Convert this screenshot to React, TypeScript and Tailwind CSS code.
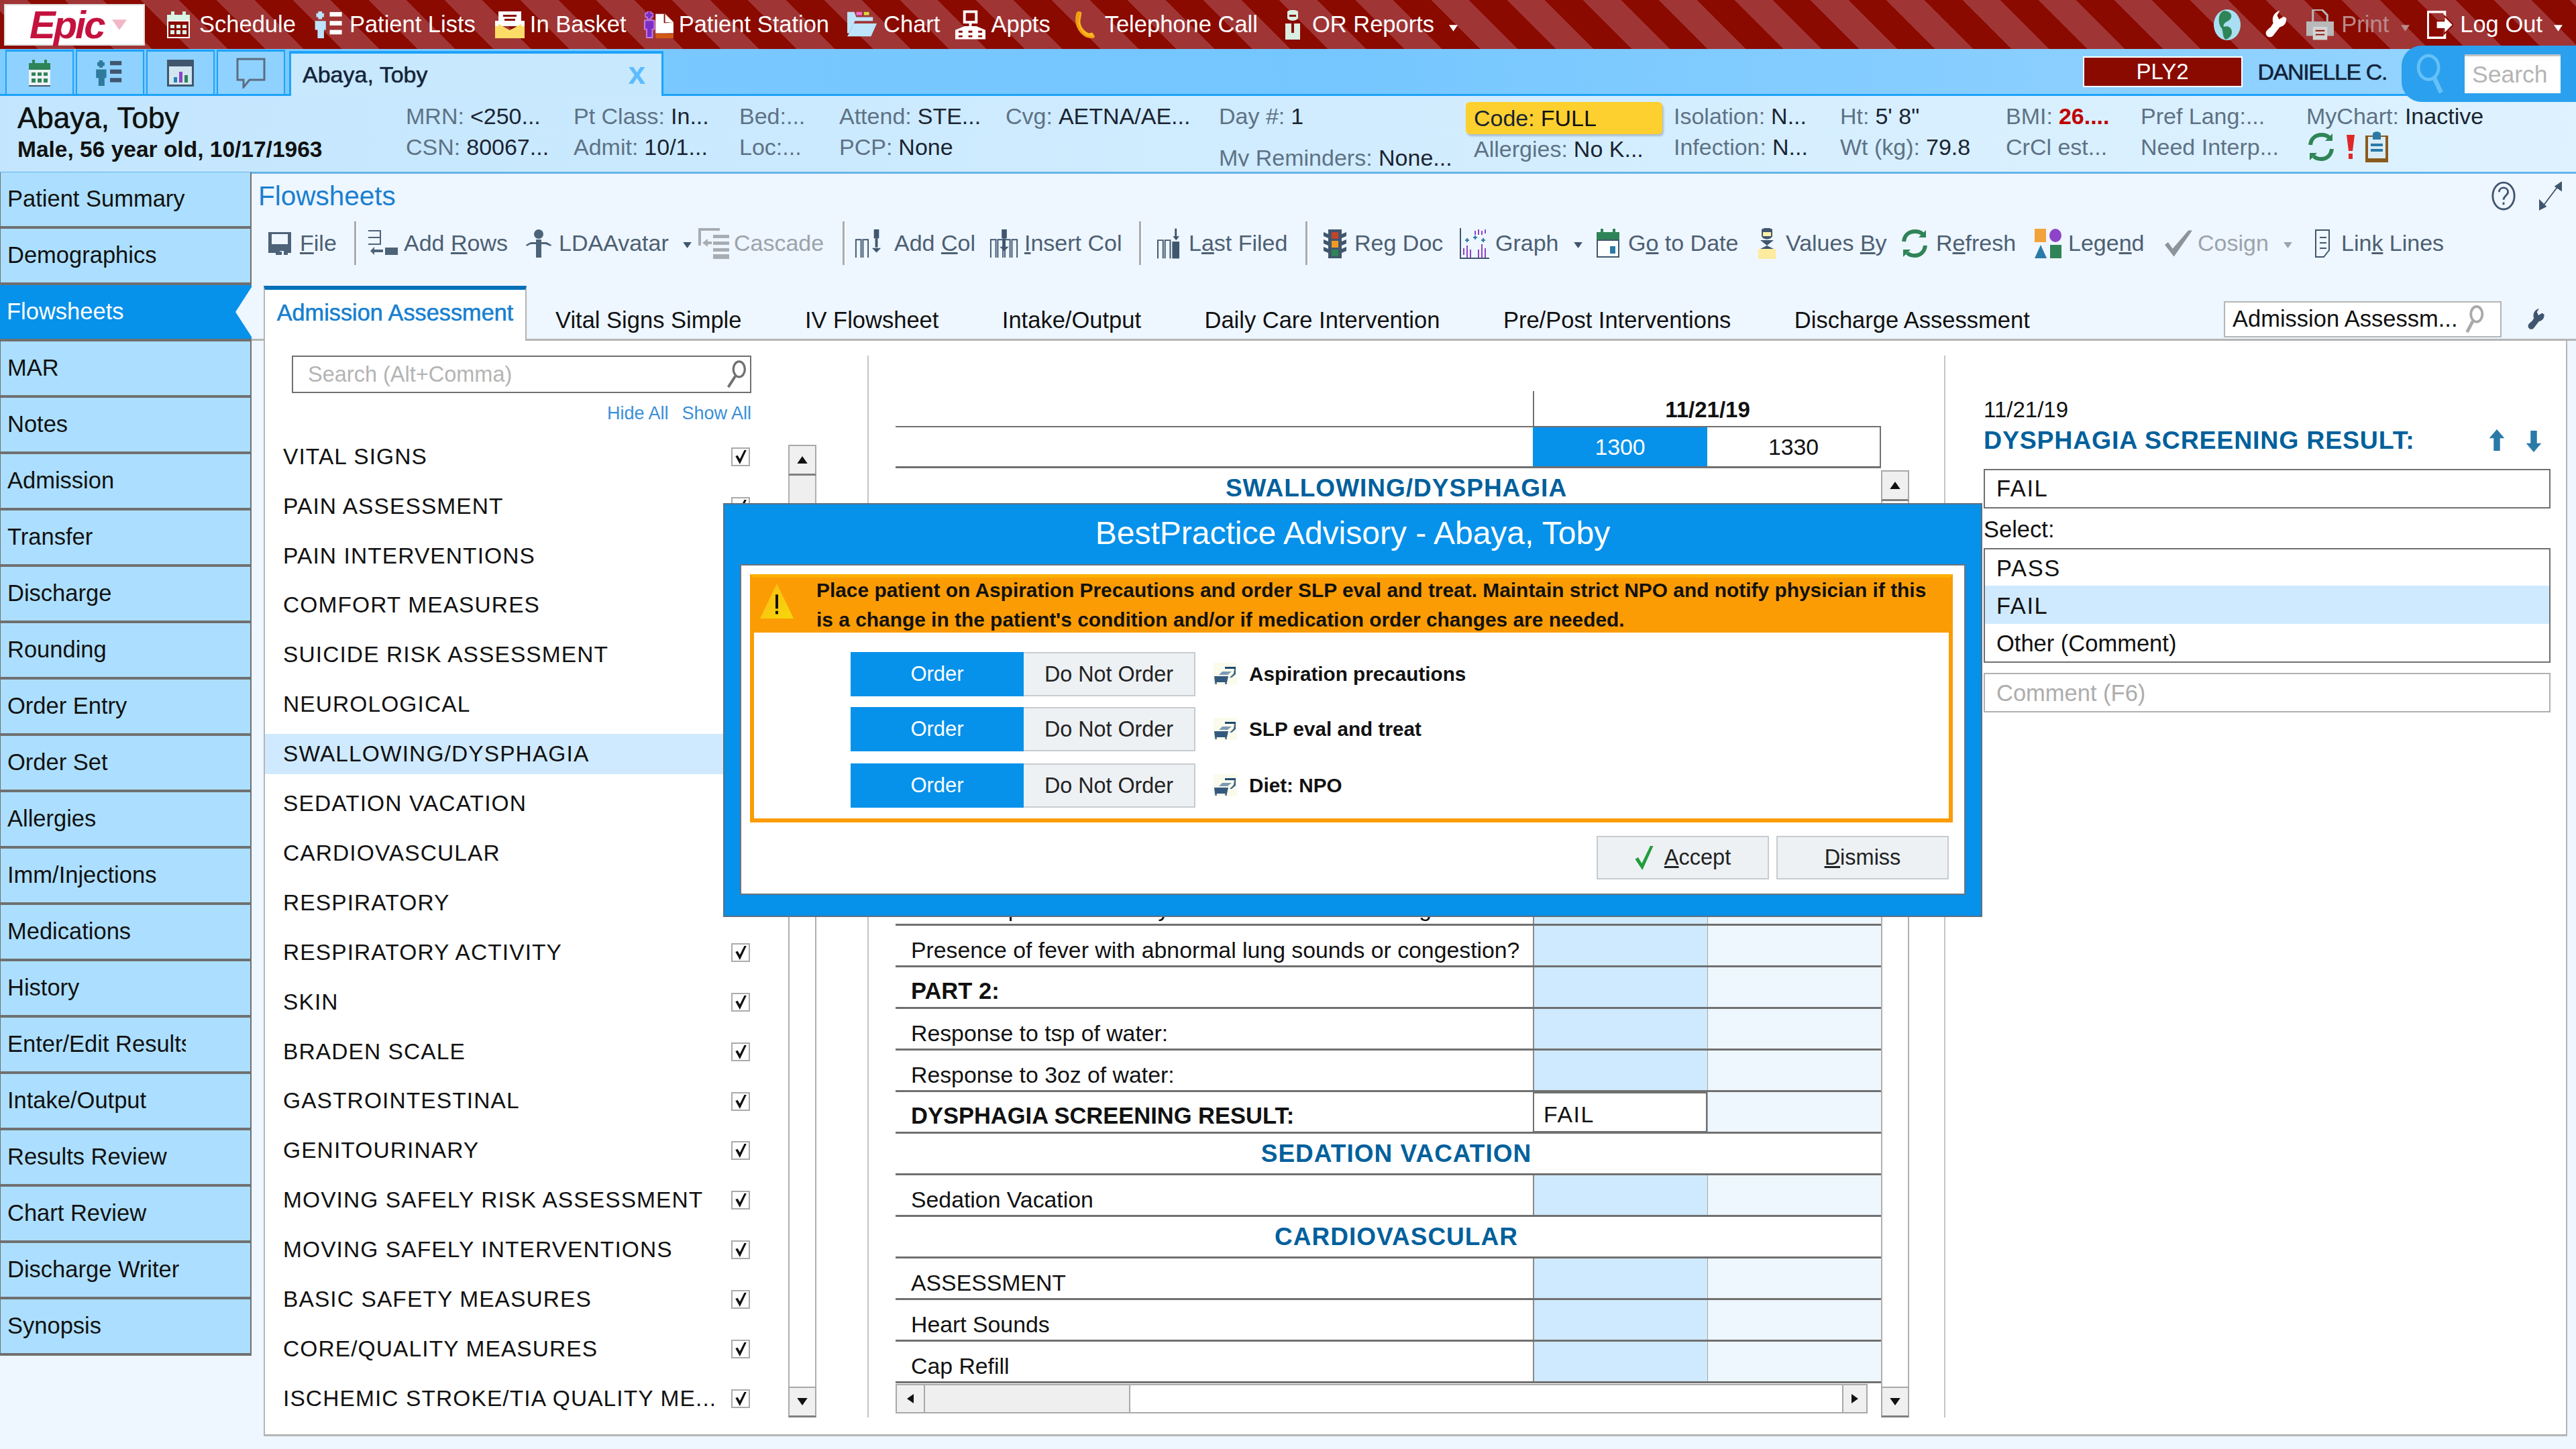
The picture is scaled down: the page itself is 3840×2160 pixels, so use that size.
import type { ReactNode } from "react";

function Cal({ band, body, cell, cls }: { band: string; body: string; cell: string; cls: string }) {
  return (
    <svg viewBox="0 0 34 40" className={cls}>
      <rect x="6" y="0" width="4" height="8" fill={band} />
      <rect x="24" y="0" width="4" height="8" fill={band} />
      <rect x="1" y="5" width="32" height="10" fill={band} />
      <rect x="1" y="15" width="32" height="25" fill={body} />
      <rect x="1" y="38" width="32" height="2" fill="#40566e" />
      {[5, 14, 23].map((x) => (
        <g key={x} fill={cell}>
          <rect x={x} y="19" width="6" height="5" />
          <rect x={x} y="28" width="6" height="6" />
        </g>
      ))}
    </svg>
  );
}

function PersonList({ c, c2, cls }: { c: string; c2: string; cls: string }) {
  return (
    <svg viewBox="0 0 46 42" className={cls}>
      <path d="M5 0h6v3h3v6h-3v3H5V9H2V3h3z" fill={c} />
      <path d="M0 15h17v14h-3v13H4V29H0z" fill={c} />
      <rect x="23" y="1" width="19" height="7" fill={c2} />
      <rect x="23" y="15" width="19" height="7" fill={c2} />
      <rect x="23" y="29" width="19" height="7" fill={c2} />
    </svg>
  );
}

function Wrench({ c, cls }: { c: string; cls: string }) {
  return (
    <svg viewBox="0 0 34 42" className={cls}>
      <path d="M22 0l-4 7 3 6 7-4 4 2c1 7-3 13-10 14L12 38c-4 5-13 2-11-6 1-2 4-5 7-7l4-6C9 10 14 2 22 0z" fill={c} />
    </svg>
  );
}

function Refresh({ cls }: { cls: string }) {
  return (
    <svg viewBox="0 0 42 46" className={cls} fill="none" stroke="#2f8457" strokeWidth="6">
      <path d="M5 20C6 11 12 5 22 5c4 0 8 1 11 4" />
      <path d="M37 26c-1 9-7 15-16 15-4 0-8-1-11-4" />
      <path d="M38 3v11H27z" fill="#2f8457" stroke="none" />
      <path d="M4 43V32h11z" fill="#2f8457" stroke="none" />
    </svg>
  );
}

function Caret({ c, cls }: { c: string; cls: string }) {
  return (
    <svg viewBox="0 0 14 10" className={cls}>
      <path d="M0 0h14L7 10z" fill={c} />
    </svg>
  );
}

// two beds on a pale square, the order type icon in the advisory
function OrderGlyph() {
  return (
    <svg viewBox="0 0 35 33" className="w-[35px] h-[33px] mr-[18px] shrink-0">
      <rect width="35" height="33" fill="#fbfbec" />
      <path d="M17 6h16v3H17z" fill="#1d4a70" />
      <path d="M31 9h2v8l-6 5h-3l6-6z" fill="#3d6488" />
      <path d="M13 13h14l-6 5H8z" fill="#7d9ab5" />
      <path d="M1 20h21l-2 9H2z" fill="#34597e" />
      <path d="M2 29h3v3H2zM17 29h3v3h-3z" fill="#5d7b9c" />
    </svg>
  );
}

function Check() {
  return (
    <span className="w-[28px] h-[28px] bg-white border-2 border-[#ababab] flex items-center justify-center shrink-0">
      <svg viewBox="0 0 20 20" className="w-[22px] h-[24px]">
        <path d="M3 9l3-1 3 5 6-12h3L9 20z" fill="#111" />
      </svg>
    </span>
  );
}

function ScrollBtn({ down }: { down?: boolean }) {
  return (
    <div className="w-full h-[46px] bg-[#f0f0f0] border-2 border-[#a9a9a9] border-b-[3px] border-b-[#7f7f7f] flex items-center justify-center shrink-0">
      <svg viewBox="0 0 14 10" className="w-[16px] h-[11px]">
        <path d={down ? "M0 0h14L7 10z" : "M0 10h14L7 0z"} fill="#111" />
      </svg>
    </div>
  );
}

function TopItem({ icon, label, cls }: { icon: ReactNode; label: string; cls: string }) {
  return (
    <div className={"flex items-center shrink-0 " + cls}>
      {icon}
      <span>{label}</span>
    </div>
  );
}

function TopBar() {
  return (
    <div className="h-[73px] shrink-0 flex items-center text-white text-[34.5px] bg-[repeating-linear-gradient(45deg,#8a0a00_0px,#8a0a00_40px,#a03535_40px,#a03535_80px)]">
      <div className="ml-[6px] w-[210px] h-[62px] bg-white border-2 border-[#ddd] flex items-center shrink-0">
        <span className="ml-[36px] text-[58px] leading-none font-bold italic tracking-[-3px] text-[#c4123f]">Epic</span>
        <Caret c="#f2b6c6" cls="w-[22px] h-[18px] ml-[12px]" />
      </div>
      <TopItem
        cls="ml-[33px]"
        label="Schedule"
        icon={
          <svg viewBox="0 0 34 40" className="w-[34px] h-[40px] mr-[14px]">
            <path d="M6 0h5v6H6zM23 0h5v6h-5z" fill="#d8f5e6" />
            <path d="M0 5h34v10H0z" fill="#d8f5e6" />
            <path d="M1 14h32v25H1z" fill="#8a0a00" stroke="#fff" strokeWidth="2" />
            {[5, 14, 23].map((x) => (
              <g key={x} fill="#d8f5e6">
                <rect x={x} y="20" width="6" height="5" />
                <rect x={x} y="28" width="6" height="6" />
              </g>
            ))}
          </svg>
        }
      />
      <TopItem cls="ml-[28px]" label="Patient Lists" icon={<PersonList c="#bde4fb" c2="#fff" cls="w-[45px] h-[40px] mr-[7px]" />} />
      <TopItem
        cls="ml-[29px]"
        label="In Basket"
        icon={
          <svg viewBox="0 0 44 40" className="w-[44px] h-[40px] mr-[8px]">
            <path d="M5 0h34v22H5z" fill="#fff" />
            <path d="M12 5h20v3H12zM14 11h16v3H14z" fill="#8a0a00" />
            <path d="M0 16l22 12 22-12v24H0z" fill="#fcdc66" />
            <path d="M0 14h5v8H0zM39 14h5v8h-5z" fill="#fff" />
          </svg>
        }
      />
      <TopItem
        cls="ml-[26px]"
        label="Patient Station"
        icon={
          <svg viewBox="0 0 46 42" className="w-[44px] h-[40px] mr-[8px]">
            <path d="M5 0h6v3h3v6h-3v3H5V9H2V3h3z" fill="#7a2fc0" stroke="#c77cf0" strokeWidth="1.5" />
            <path d="M1 14h15v14h-3v13H4V28H1z" fill="#7a2fc0" stroke="#c77cf0" strokeWidth="2" />
            <path d="M18 4h16l12 13v17H18z" fill="#fff" />
            <path d="M31 4h3l12 13h-3l-7 1h-5z" fill="#8a0a00" />
            <path d="M33 4l13 13H33z" fill="#fff" />
            <path d="M18 35h28v7H18z" fill="#d25a12" />
          </svg>
        }
      />
      <TopItem
        cls="ml-[27px]"
        label="Chart"
        icon={
          <svg viewBox="0 0 46 40" className="w-[44px] h-[40px] mr-[10px]">
            <path d="M0 0h11l3 8h26v6H12L3 33H0z" fill="#bde4fb" />
            <rect x="14" y="0" width="9" height="5" fill="#f26bd4" />
            <rect x="26" y="0" width="8" height="5" fill="#d6dc3a" />
            <path d="M10 18h36l-9 20H0l2-3z" fill="#bde4fb" />
          </svg>
        }
      />
      <TopItem
        cls="ml-[23px]"
        label="Appts"
        icon={
          <svg viewBox="0 0 46 44" className="w-[45px] h-[44px] mr-[8px]">
            <path d="M12 0h22v20H12z" fill="#fff" />
            <path d="M16 4h14v12H16z" fill="#8a0a00" />
            <path d="M21 20h4v4h-4z" fill="#fff" />
            <path d="M0 30l14-6h18l14 6v14H0z" fill="#fff" />
            <path d="M5 31h6v3H5zM20 31h6v3h-6zM35 31h6v3h-6zM5 38h6v3H5zM20 38h6v3h-6zM35 38h6v3h-6z" fill="#8a0a00" />
          </svg>
        }
      />
      <TopItem
        cls="ml-[35px]"
        label="Telephone Call"
        icon={
          <svg viewBox="0 0 32 42" className="w-[32px] h-[40px] mr-[14px]">
            <path d="M6 0c3 0 5 1 5 3L9 15c0 9 6 16 13 19l6-1 4 7c-4 2-9 2-13 0C7 35 1 22 2 10 2 6 3 1 6 0z" fill="#fbb81c" />
            <path d="M6 0c2 0 3 1 3 3L6 18c1 6 6 16 14 20l11 1-1 3c-8 0-13-1-18-6C4 29 0 18 2 8 2 4 3 1 6 0z" fill="#f39c12" />
          </svg>
        }
      />
      <TopItem
        cls="ml-[39px]"
        label="OR Reports"
        icon={
          <svg viewBox="0 0 26 44" className="w-[26px] h-[44px] mr-[16px]">
            <path d="M5 2c4-3 12-3 16 0v10c-2 5-14 5-16 0z" fill="#d8efe2" />
            <path d="M8 7h10v3H8z" fill="#8a0a00" />
            <path d="M2 20h22v24H2z" fill="#d8efe2" />
            <path d="M11 20h4v14h-4z" fill="#8a0a00" />
          </svg>
        }
      />
      <Caret c="#fff" cls="w-[13px] h-[10px] ml-[22px] mt-[10px]" />
      <div className="ml-auto flex items-center">
        <svg viewBox="0 0 40 46" className="w-[40px] h-[46px]">
          <ellipse cx="20" cy="23" rx="20" ry="23" fill="#a9dff2" />
          <path d="M15 2c8 0 14 5 10 12-2 4-12 5-10 12 5-2 12 0 12 8 0 5-4 9-9 11-6-3-3-13-7-18C7 22 5 6 15 2z" fill="#2f8457" />
        </svg>
        <Wrench c="#fff" cls="w-[33px] h-[41px] ml-[37px]" />
        <TopItem
          cls="ml-[28px] text-[#ba8b8b]"
          label="Print"
          icon={
            <svg viewBox="0 0 42 46" className="w-[41px] h-[46px] mr-[11px]">
              <path d="M10 0h14l8 8v12H10z" fill="none" stroke="#b9b9b9" strokeWidth="3" />
              <path d="M0 18h42v22H0z" fill="#b9b9b9" />
              <path d="M10 26h22v20H10z" fill="#d4d4d4" />
              <path d="M14 31h14v2H14zM14 37h14v2H14z" fill="#8a0a00" />
            </svg>
          }
        />
        <Caret c="#ba8b8b" cls="w-[13px] h-[10px] ml-[18px] mt-[10px]" />
        <TopItem
          cls="ml-[26px]"
          label="Log Out"
          icon={
            <svg viewBox="0 0 40 42" className="w-[39px] h-[42px] mr-[10px]">
              <path d="M1 1h26v40H1z" fill="none" stroke="#fff" strokeWidth="4" />
              <path d="M14 15h12V7l14 14-14 14v-8H14z" fill="#fff" stroke="#8a0a00" strokeWidth="2" />
            </svg>
          }
        />
        <Caret c="#fff" cls="w-[13px] h-[10px] ml-[17px] mr-[20px] mt-[10px]" />
      </div>
    </div>
  );
}

function SmallTab({ children }: { children: ReactNode }) {
  return (
    <div className="w-[102px] h-[66px] mr-[3px] bg-[#8fd2ff] border-2 border-b-0 border-t-[3px] border-[#1ea3fb] flex items-center justify-center shrink-0">
      {children}
    </div>
  );
}

function TabBar() {
  return (
    <div className="h-[70px] shrink-0 flex items-end pl-[8px] border-b-[3px] border-[#1ea3fb] bg-gradient-to-r from-[#7ecbff] via-[#74c6ff] to-[#97d5ff]">
      <SmallTab>
        <Cal band="#2f8457" body="#eef2f4" cell="#2f8457" cls="w-[34px] h-[40px]" />
      </SmallTab>
      <SmallTab>
        <PersonList c="#2f7a9c" c2="#40566e" cls="w-[42px] h-[38px]" />
      </SmallTab>
      <SmallTab>
        <svg viewBox="0 0 40 40" className="w-[40px] h-[40px]">
          <path d="M0 0h40v40H0z" fill="#40566e" />
          <path d="M3 10h34v27H3z" fill="#d2e6f0" />
          <path d="M10 26h5v8h-5z" fill="#2a80b0" />
          <path d="M18 18h5v16h-5z" fill="#8e44c8" />
          <path d="M26 23h5v11h-5z" fill="#2f8457" />
        </svg>
      </SmallTab>
      <SmallTab>
        <svg viewBox="0 0 44 46" className="w-[44px] h-[46px]" fill="none" stroke="#5c6d80" strokeWidth="3">
          <path d="M2 2h40v31H20l-9 11v-11H2z" />
        </svg>
      </SmallTab>
      <div className="w-[558px] h-[67px] -mb-[3px] ml-[3px] bg-[#c8e8fe] border-x-[3px] border-t-[4px] border-[#1ea3fb] border-b-0 flex items-center pl-[17px] shrink-0">
        <span className="text-[34px] text-[#16243a] [text-shadow:0_0_1px_#16243a]">Abaya, Toby</span>
        <span className="ml-auto mr-[24px] text-[#5bbcff] text-[46px] font-bold leading-none -mt-[6px]">x</span>
      </div>
      <div className="ml-auto self-center flex items-center mr-[282px] mt-[1px]">
        <div className="w-[238px] h-[46px] bg-[#8a0a00] border-2 border-white text-white text-[33px] flex items-center justify-center">
          PLY2
        </div>
        <span className="ml-[23px] text-[34px] tracking-[-1.4px] text-[#14223a] [text-shadow:0_0_1px_#14223a]">DANIELLE C.</span>
      </div>
    </div>
  );
}

function Field({ label, value, cls }: { label: string; value?: string; cls?: string }) {
  return (
    <div className={"h-[46px] flex items-center whitespace-nowrap " + (cls ?? "")}>
      <span>{label}</span>
      {value ? <span className="text-[#1a2432] ml-[9px]">{value}</span> : null}
    </div>
  );
}

function PatientHeader() {
  return (
    <div className="h-[116px] shrink-0 flex border-b-[3px] border-[#64b5ea] bg-gradient-to-r from-[#c3e6fe] to-[#def2ff] text-[34px] text-[#5e7285]">
      <div className="w-[605px] pl-[26px] pt-[5px] shrink-0 text-[#111]">
        <div className="text-[44px] leading-[56px] [text-shadow:0_0_1px_#111]">Abaya, Toby</div>
        <div className="text-[33.5px] leading-[38px] font-bold">Male, 56 year old, 10/17/1963</div>
      </div>
      <div className="w-[250px] pt-[7px] shrink-0">
        <Field label="MRN:" value="<250..." />
        <Field label="CSN:" value="80067..." />
      </div>
      <div className="w-[247px] pt-[7px] shrink-0">
        <Field label="Pt Class:" value="In..." />
        <Field label="Admit:" value="10/1..." />
      </div>
      <div className="w-[149px] pt-[7px] shrink-0">
        <Field label="Bed:..." />
        <Field label="Loc:..." />
      </div>
      <div className="w-[248px] pt-[7px] shrink-0">
        <Field label="Attend:" value="STE..." />
        <Field label="PCP:" value="None" />
      </div>
      <div className="w-[318px] pt-[7px] shrink-0">
        <Field label="Cvg:" value="AETNA/AE..." />
      </div>
      <div className="w-[368px] pt-[7px] shrink-0">
        <Field label="Day #:" value="1" />
        <div className="h-[26px] mt-[26px] leading-[26px] overflow-hidden whitespace-nowrap">
          My Reminders: <span className="text-[#1a2432]">None...</span>
        </div>
      </div>
      <div className="w-[310px] pt-[9px] shrink-0">
        <div className="w-[293px] h-[48px] bg-[#fdd02f] rounded-[6px] shadow-[2px_3px_3px_rgba(0,0,0,0.2)] flex items-center pl-[12px] text-[#1a2432]">
          Code:<span className="ml-[9px] text-[#111]">FULL</span>
        </div>
        <div className="pl-[12px] -mt-[1px]">
          <Field label="Allergies:" value="No K..." />
        </div>
      </div>
      <div className="w-[248px] pt-[7px] shrink-0">
        <Field label="Isolation:" value="N..." />
        <Field label="Infection:" value="N..." />
      </div>
      <div className="w-[247px] pt-[7px] shrink-0">
        <Field label="Ht:" value={"5' 8\""} />
        <Field label="Wt (kg):" value="79.8" />
      </div>
      <div className="w-[201px] pt-[7px] shrink-0">
        <div className="h-[46px] flex items-center whitespace-nowrap">
          BMI:<span className="ml-[9px] text-[#c00000] font-bold">26....</span>
        </div>
        <Field label="CrCl est..." />
      </div>
      <div className="w-[247px] pt-[7px] shrink-0">
        <Field label="Pref Lang:..." />
        <Field label="Need Interp..." />
      </div>
      <div className="pt-[7px] flex-1">
        <Field label="MyChart:" value="Inactive" />
        <div className="flex items-center h-[46px]">
          <Refresh cls="w-[44px] h-[46px]" />
          <svg viewBox="0 0 12 36" className="w-[12px] h-[36px] ml-[16px]">
            <path d="M0 0h12l-3 24H3z" fill="#e02727" />
            <rect x="3" y="28" width="6" height="8" fill="#e02727" />
          </svg>
          <svg viewBox="0 0 34 46" className="w-[34px] h-[46px] ml-[16px]">
            <path d="M0 6h34v40H0z" fill="#8a5a1e" />
            <path d="M4 8h26v32H4z" fill="#d9ecf7" />
            <path d="M11 4c0-5 12-5 12 0v8H11z" fill="#2a7aa8" />
            <path d="M8 18h18v4H8zM8 26h18v4H8z" fill="#2a7aa8" />
          </svg>
        </div>
      </div>
    </div>
  );
}

const sideItems = [
  "Patient Summary",
  "Demographics",
  "Flowsheets",
  "MAR",
  "Notes",
  "Admission",
  "Transfer",
  "Discharge",
  "Rounding",
  "Order Entry",
  "Order Set",
  "Allergies",
  "Imm/Injections",
  "Medications",
  "History",
  "Enter/Edit Results",
  "Intake/Output",
  "Results Review",
  "Chart Review",
  "Discharge Writer",
  "Synopsis",
];

function Sidebar() {
  return (
    <div className="w-[375px] shrink-0 flex flex-col -mt-[2px]">
      {sideItems.map((s) =>
        s === "Flowsheets" ? (
          <div key={s} className="relative h-[84px] pl-[10px] flex items-center text-white bg-[#0691ea] border-b-[4px] border-[#707070] text-[34.5px]">
            {s}
            <svg viewBox="0 0 24 80" preserveAspectRatio="none" className="absolute right-0 top-[3px] w-[24px] h-[74px]">
              <path d="M24 0L0 40l24 40z" fill="#eef6ff" />
            </svg>
          </div>
        ) : (
          <div key={s} className="h-[84px] pl-[10px] flex items-center bg-[#acdfff] border-b-[4px] border-r-2 border-l border-[#707070] text-[34.5px] text-[#111]">
            <span className={s === "Enter/Edit Results" ? "w-[266px] overflow-hidden whitespace-nowrap" : "whitespace-nowrap"}>{s}</span>
          </div>
        ),
      )}
    </div>
  );
}

function Tool({
  w,
  iconW,
  icon,
  children,
  caret,
  muted,
}: {
  w: string;
  iconW: string;
  icon: ReactNode;
  children: ReactNode;
  caret?: string;
  muted?: boolean;
}) {
  return (
    <div className={"flex items-center shrink-0 whitespace-nowrap " + w + (muted ? " text-[#9ca3ab]" : "")}>
      <div className={"shrink-0 flex items-center " + iconW}>{icon}</div>
      <span>{children}</span>
      {caret ? <Caret c={muted ? "#9ca3ab" : "#40566e"} cls={"w-[13px] h-[9px] mt-[6px] " + caret} /> : null}
    </div>
  );
}

function Sep() {
  return <div className="w-[5px] h-[65px] bg-[#a9acaf] border-r-2 border-white shrink-0 -ml-[1px] -mr-[2px]" />;
}

function ColIcon({ flip }: { flip?: boolean }) {
  return (
    <svg viewBox="0 0 46 44" className="w-[44px] h-[44px]" fill="none">
      <path d="M2 44V16h8v28M13 44V16h8v28" stroke="#40566e" strokeWidth="2" />
      {flip ? <path d="M24 44V16h8v28M35 44V16h8v28" stroke="#40566e" strokeWidth="2" /> : null}
      <rect x={flip ? 19 : 30} y="0" width="8" height="14" fill="#40566e" />
      <path d={flip ? "M23 34l-7-7h14z" : "M34 36l-7-7h14z"} fill="#40566e" />
      <rect x={flip ? 21 : 32} y="14" width="4" height="14" fill="#40566e" />
    </svg>
  );
}

function Toolbar() {
  return (
    <div className="h-[65px] mt-[5px] ml-[25px] flex items-center text-[34px] text-[#4c6073] shrink-0">
      <Tool
        w="w-[129px]"
        iconW="w-[47px]"
        icon={
          <svg viewBox="0 0 34 34" className="w-[34px] h-[34px]">
            <path d="M0 0h34v31h-5v3h-6v-6h-6v6h-6v-3H6v3H6v-3H0z" fill="#4d6378" />
            <rect x="5" y="3" width="24" height="15" fill="#eef6ff" />
            <rect x="14" y="29" width="6" height="5" fill="#4d6378" />
          </svg>
        }
      >
        <span className="underline">F</span>ile
      </Tool>
      <Sep />
      <div className="w-[18px] shrink-0" />
      <Tool
        w="w-[235px]"
        iconW="w-[53px]"
        icon={
          <svg viewBox="0 0 44 40" className="w-[44px] h-[40px]">
            <path d="M0 0h19v2H0zM0 10h19v2H0zM0 20h19v2H0zM17 0h2v22h-2z" fill="#4d6378" />
            <path d="M3 31l6-6v4h13v4H9v4z" fill="#4d6378" />
            <rect x="25" y="26" width="19" height="11" fill="#4d6378" />
          </svg>
        }
      >
        Add <span className="underline">R</span>ows
      </Tool>
      <Tool
        w="w-[257px]"
        iconW="w-[49px]"
        caret="ml-[21px]"
        icon={
          <svg viewBox="0 0 38 42" className="w-[38px] h-[42px]">
            <circle cx="19" cy="7" r="7" fill="#4d6378" />
            <path d="M15 15h8v4h8l7 4-1 2-8-3h-6v20h-8V22H7l-6 3-1-2 7-4h8z" fill="#4d6378" />
          </svg>
        }
      >
        LDAAvatar
      </Tool>
      <Tool
        w="w-[216px]"
        iconW="w-[53px]"
        muted
        icon={
          <svg viewBox="0 0 46 46" className="w-[46px] h-[46px]" fill="#a7adb3">
            <path d="M0 0h32v4H4v22H0z" />
            <path d="M22 10h24v5H22zM22 20h24v5H22zM22 30h24v5H22zM22 39h24v7H22z" />
            <path d="M6 22l8-6v4h6v4h-6v4z" />
          </svg>
        }
      >
        Cascade
      </Tool>
      <Sep />
      <div className="w-[15px] shrink-0" />
      <Tool w="w-[201px]" iconW="w-[59px]" icon={<ColIcon />}>
        Add <span className="underline">C</span>ol
      </Tool>
      <Tool w="w-[224px]" iconW="w-[52px]" icon={<ColIcon flip />}>
        <span className="underline">I</span>nsert Col
      </Tool>
      <Sep />
      <div className="w-[24px] shrink-0" />
      <Tool
        w="w-[222px]"
        iconW="w-[47px]"
        icon={
          <svg viewBox="0 0 36 46" className="w-[35px] h-[46px]">
            <path d="M1 46V18h8v28M12 46V18h8v28" fill="none" stroke="#40566e" strokeWidth="2" />
            <rect x="23" y="20" width="11" height="26" fill="#40566e" />
            <path d="M27 0h3v12h4l-5 6-5-6h3z" fill="#40566e" />
          </svg>
        }
      >
        L<span className="underline">a</span>st Filed
      </Tool>
      <Sep />
      <div className="w-[24px] shrink-0" />
      <Tool
        w="w-[203px]"
        iconW="w-[46px]"
        icon={
          <svg viewBox="0 0 34 46" className="w-[34px] h-[46px]">
            <path d="M0 6l7 3V2h20v7l7-3v6l-7 3v5l7-3v6l-7 3v5l7-3v6l-7 3v8H7v-8l-7-3v-6l7 3v-5l-7-3v-6l7 3v-5l-7-3z" fill="#40566e" />
            <rect x="12" y="6" width="10" height="10" fill="#c2442a" />
            <rect x="12" y="19" width="10" height="10" fill="#f19a22" />
            <rect x="12" y="32" width="10" height="10" fill="#2f8457" />
          </svg>
        }
      >
        Re<span className="underline">g</span> Doc
      </Tool>
      <Tool
        w="w-[204px]"
        iconW="w-[53px]"
        caret="ml-[22px]"
        icon={
          <svg viewBox="0 0 44 46" className="w-[44px] h-[46px]">
            <path d="M0 0h2v44h42v2H0z" fill="#40566e" />
            <path d="M6 40V30M11 44V26M16 44V32M28 44V32M33 44V24M38 44V30M23 4V10M28 2V10M33 4V10M38 2V8" stroke="#8e44c8" strokeWidth="2" />
            <path d="M8 18h6M11 15v6M20 14h6M23 11v6M32 18h6M35 15v6" stroke="#2a7aa8" strokeWidth="2" />
          </svg>
        }
      >
        Graph
      </Tool>
      <Tool
        w="w-[241px]"
        iconW="w-[47px]"
        icon={
          <svg viewBox="0 0 34 44" className="w-[34px] h-[44px]">
            <path d="M6 0h4v6H6zM24 0h4v6h-4z" fill="#2f8457" />
            <path d="M0 5h34v12H0z" fill="#2f8457" />
            <path d="M1 17h32v25H1z" fill="#fff" stroke="#40566e" strokeWidth="2" />
            <path d="M20 26h8v11h-8z" fill="#2a7aa8" />
          </svg>
        }
      >
        G<span className="underline">o</span> to Date
      </Tool>
      <Tool
        w="w-[212px]"
        iconW="w-[41px]"
        icon={
          <svg viewBox="0 0 26 46" className="w-[26px] h-[46px]">
            <path d="M5 2c4-3 12-3 16 0v10c-2 6-14 6-16 0z" fill="#40566e" />
            <path d="M7 6h12v6H7z" fill="#fdf1a8" />
            <path d="M3 18h20l-10 8z" fill="#40566e" />
            <path d="M13 26l10 5H3z" fill="#40566e" />
            <path d="M0 31h26v15H0z" fill="#fdeb9e" />
          </svg>
        }
      >
        Values <span className="underline">B</span>y
      </Tool>
      <Tool w="w-[200px]" iconW="w-[53px]" icon={<Refresh cls="w-[42px] h-[46px]" />}>
        R<span className="underline">e</span>fresh
      </Tool>
      <Tool
        w="w-[194px]"
        iconW="w-[50px]"
        icon={
          <svg viewBox="0 0 40 44" className="w-[40px] h-[44px]">
            <rect x="0" y="0" width="17" height="20" fill="#f3a33c" />
            <ellipse cx="31" cy="10" rx="9" ry="10" fill="#8e44c8" />
            <path d="M9 24l9 20H0z" fill="#2a7aa8" />
            <rect x="23" y="24" width="17" height="20" fill="#2f8457" />
          </svg>
        }
      >
        Lege<span className="underline">n</span>d
      </Tool>
      <Tool
        w="w-[223px]"
        iconW="w-[49px]"
        muted
        caret="ml-[22px]"
        icon={
          <svg viewBox="0 0 42 40" className="w-[41px] h-[40px]">
            <path d="M0 22l5-4 7 10L36 0h6L14 40z" fill="#8d949a" />
          </svg>
        }
      >
        Cosign
      </Tool>
      <Tool
        w="w-[230px]"
        iconW="w-[40px]"
        icon={
          <svg viewBox="0 0 26 46" className="w-[26px] h-[46px]" fill="none" stroke="#40566e" strokeWidth="2">
            <path d="M6 3h16v30l-8 10H2V3z" />
            <path d="M2 3h12M8 14h10M8 22h10M8 30h10" />
          </svg>
        }
      >
        Lin<span className="underline">k</span> Lines
      </Tool>
    </div>
  );
}

function Tabs() {
  return (
    <div className="h-[82px] mt-[31px] flex items-end shrink-0 border-b-[3px] border-[#b5b5b5] text-[34.5px] text-[#111]">
      <div className="w-[392px] ml-[18px] h-[82px] -mb-[3px] bg-white border-t-[6px] border-[#0070b8] border-x-2 border-x-[#b5b5b5] flex items-start justify-center shrink-0 pt-[9px]">
        <span className="text-[#1a7fd0] text-[34.3px] [text-shadow:0_0_1px_#1a7fd0] whitespace-nowrap">Admission Assessment</span>
      </div>
      <div className="flex h-full items-center gap-[94.5px] ml-[43px] pt-[24px] whitespace-nowrap">
        <span>Vital Signs Simple</span>
        <span>IV Flowsheet</span>
        <span>Intake/Output</span>
        <span>Daily Care Intervention</span>
        <span>Pre/Post Interventions</span>
        <span>Discharge Assessment</span>
      </div>
      <div className="ml-auto flex items-center h-full pt-[21px] mr-[45px]">
        <div className="w-[414px] h-[54px] bg-white border-2 border-[#b5b5b5] flex items-center pl-[11px] whitespace-nowrap">
          <span>Admission Assessm...</span>
          <svg viewBox="0 0 30 44" className="w-[32px] h-[42px] ml-[8px]" fill="none" stroke="#a9a9a9" strokeWidth="4">
            <ellipse cx="19" cy="14" rx="9" ry="12" />
            <path d="M13 25L4 42" strokeWidth="5" />
          </svg>
        </div>
        <Wrench c="#40566e" cls="w-[28px] h-[32px] ml-[38px]" />
      </div>
    </div>
  );
}

const groups: [string, boolean][] = [
  "VITAL SIGNS",
  "PAIN ASSESSMENT",
  "PAIN INTERVENTIONS",
  "COMFORT MEASURES",
  "SUICIDE RISK ASSESSMENT",
  "NEUROLOGICAL",
  "SWALLOWING/DYSPHAGIA",
  "SEDATION VACATION",
  "CARDIOVASCULAR",
  "RESPIRATORY",
  "RESPIRATORY ACTIVITY",
  "SKIN",
  "BRADEN SCALE",
  "GASTROINTESTINAL",
  "GENITOURINARY",
  "MOVING SAFELY RISK ASSESSMENT",
  "MOVING SAFELY INTERVENTIONS",
  "BASIC SAFETY MEASURES",
  "CORE/QUALITY MEASURES",
  "ISCHEMIC STROKE/TIA QUALITY ME...",
].map((g) => [g, g === "SWALLOWING/DYSPHAGIA"]);

function GroupList() {
  return (
    <div className="w-[898px] shrink-0 flex flex-col">
      <div className="ml-[40px] w-[685px] h-[56px] shrink-0 border-2 border-[#707070] flex items-center pl-[22px] text-[32.5px] text-[#b4b4b4]">
        Search (Alt+Comma)
        <svg viewBox="0 0 30 44" className="w-[36px] h-[42px] ml-auto mr-[3px]" fill="none" stroke="#707070" strokeWidth="3.5">
          <ellipse cx="20" cy="14" rx="9" ry="12" />
          <path d="M14 25L3 42" strokeWidth="4" />
        </svg>
      </div>
      <div className="ml-[40px] w-[685px] h-[58px] shrink-0 flex items-center justify-end gap-[20px] text-[27px] text-[#3a8fd8] pt-[2px]">
        <span>Hide All</span>
        <span>Show All</span>
      </div>
      <div className="flex flex-1 min-h-0">
        <div className="w-[780px] shrink-0 text-[33.5px] tracking-[1.1px] text-[#111]">
          {groups.map(([g, sel]) => (
            <div key={g} className="h-[73.9px] flex items-center">
              <div className={"w-full h-[60px] flex items-center pl-[27px] " + (sel ? "bg-[#cfeaff]" : "")}>
                <span className="whitespace-nowrap">{g}</span>
                {sel ? null : <span className="ml-auto mr-[57px]"><Check /></span>}
              </div>
            </div>
          ))}
        </div>
        <div className="w-[42px] shrink-0 mt-[19px] flex flex-col justify-between border-x-2 border-[#b0b0b0]">
          <div className="-mx-[2px]">
            <ScrollBtn />
            <div className="h-[200px] bg-[#efefef] border-x-2 border-b-2 border-[#b0b0b0]" />
          </div>
          <div className="-mx-[2px]">
            <ScrollBtn down />
          </div>
        </div>
      </div>
    </div>
  );
}

function Row({ label, bold, fail }: { label: string; bold?: boolean; fail?: boolean }) {
  return (
    <div className="h-[62px] flex border-b-[3px] border-[#707070] shrink-0">
      <div className={"w-[950px] pl-[23px] pt-[13px] flex items-center whitespace-nowrap shrink-0 " + (bold ? "font-bold text-[34.5px]" : "")}>{label}</div>
      {fail ? (
        <div className="w-[260px] bg-white border-x-2 border-t-2 border-b border-[#707070] pl-[14px] pt-[7px] tracking-[1.6px] flex items-center shrink-0">FAIL</div>
      ) : (
        <div className="w-[260px] bg-[#cfeaff] border-l-2 border-[#8a8a8a] shrink-0" />
      )}
      <div className="flex-1 bg-[#eef6fe] border-l border-[#a8a8a8]" />
    </div>
  );
}

function SectionRow({ label }: { label: string }) {
  return (
    <div className="h-[62px] flex items-center justify-center pl-[24px] border-b-[3px] border-[#707070] font-bold text-[#00609c] text-[37px] tracking-[1px] shrink-0">
      {label}
    </div>
  );
}

function FlowTable() {
  return (
    <div className="flex-1 flex border-x-2 border-[#c4c4c4] pl-[40px]">
      <div className="w-[1469px] shrink-0 pt-[53px] flex flex-col text-[33.8px] text-[#111]">
        <div className="h-[54px] flex shrink-0 border-b-2 border-[#707070]">
          <div className="w-[950px] shrink-0" />
          <div className="flex-1 border-l-2 border-[#707070] flex items-center justify-center font-bold pt-[4px] text-[33px]">11/21/19</div>
        </div>
        <div className="h-[61px] flex shrink-0 border-b-[3px] border-[#707070]">
          <div className="w-[950px] shrink-0" />
          <div className="w-[260px] bg-[#0691ea] text-white flex items-center justify-center shrink-0">1300</div>
          <div className="flex-1 flex items-center justify-center bg-white border-r-2 border-[#707070]">1330</div>
        </div>
        <SectionRow label="SWALLOWING/DYSPHAGIA" />
        <div className="h-[558px] shrink-0" />
        <Row label="Does the patient currently have enteral tube feeding?" />
        <Row label="Presence of fever with abnormal lung sounds or congestion?" />
        <Row label="PART 2:" bold />
        <Row label="Response to tsp of water:" />
        <Row label="Response to 3oz of water:" />
        <Row label="DYSPHAGIA SCREENING RESULT:" bold fail />
        <SectionRow label="SEDATION VACATION" />
        <Row label="Sedation Vacation" />
        <SectionRow label="CARDIOVASCULAR" />
        <Row label="ASSESSMENT" />
        <Row label="Heart Sounds" />
        <Row label="Cap Refill" />
        <div className="w-[1449px] h-[44px] mt-[1px] shrink-0 flex border-2 border-[#a9a9a9] bg-white">
          <div className="w-[42px] border-r-2 border-[#a9a9a9] bg-[#f0f0f0] flex items-center justify-center shrink-0">
            <svg viewBox="0 0 10 14" className="w-[10px] h-[16px]"><path d="M10 0v14L0 7z" fill="#111" /></svg>
          </div>
          <div className="w-[306px] bg-[#efefef] border-r-2 border-[#a9a9a9] shrink-0" />
          <div className="flex-1" />
          <div className="w-[36px] border-l-2 border-[#a9a9a9] bg-[#f0f0f0] flex items-center justify-center shrink-0">
            <svg viewBox="0 0 10 14" className="w-[10px] h-[16px]"><path d="M0 0v14l10-7z" fill="#111" /></svg>
          </div>
        </div>
      </div>
      <div className="w-[42px] shrink-0 mt-[171px] flex flex-col justify-between border-x-2 border-[#b0b0b0]">
        <div className="-mx-[2px]">
          <ScrollBtn />
        </div>
        <div className="-mx-[2px]">
          <ScrollBtn down />
        </div>
      </div>
    </div>
  );
}

function DetailPane() {
  return (
    <div className="flex-1 pl-[57px] pr-[23px] pt-[61px] text-[34.5px] text-[#111]">
      <div className="leading-[40px] text-[33px]">11/21/19</div>
      <div className="flex items-start h-[50px]">
        <span className="font-bold text-[#00609c] text-[37.5px] tracking-[0.8px] leading-[50px] whitespace-nowrap">DYSPHAGIA SCREENING RESULT:</span>
        <svg viewBox="0 0 24 36" className="w-[24px] h-[34px] ml-auto mt-[9px]"><path d="M12 0l12 14h-7v20H7V14H0z" fill="#2a7aa8" /></svg>
        <svg viewBox="0 0 24 36" className="w-[24px] h-[34px] ml-[31px] mr-[13px] mt-[9px]"><path d="M12 36L0 22h7V2h10v20h7z" fill="#2a7aa8" /></svg>
      </div>
      <div className="h-[59px] mt-[18px] border-2 border-[#707070] flex items-center pl-[17px] tracking-[1.6px]">FAIL</div>
      <div className="h-[59px] pt-[4px] flex items-center">Select:</div>
      <div className="h-[171px] border-2 border-[#707070] flex flex-col">
        <div className="h-[54px] pt-[4px] flex items-center pl-[17px] tracking-[1.6px]">PASS</div>
        <div className="h-[60px] pt-[4px] flex items-center pl-[17px] bg-[#cfeaff] tracking-[1.6px]">FAIL</div>
        <div className="flex-1 pt-[4px] flex items-center pl-[17px]">Other (Comment)</div>
      </div>
      <div className="h-[59px] pt-[2px] mt-[15px] border-2 border-[#b0b0b0] flex items-center pl-[17px] text-[#adadad]">Comment (F6)</div>
    </div>
  );
}

function OrderRow({ label, cls }: { label: string; cls?: string }) {
  return (
    <div className={"flex items-center h-[66px] " + (cls ?? "")}>
      <div className="w-[258px] h-full bg-[#0691ea] text-white flex items-center justify-center text-[31px] shrink-0">Order</div>
      <div className="w-[256px] h-full bg-[#edf1f4] border-y-2 border-[#c8ccd0] border-r-2 flex items-center justify-center text-[32.3px] text-[#222] shrink-0">Do Not Order</div>
      <div className="ml-[27px] flex items-center font-bold text-[29.7px] text-[#111]">
        <OrderGlyph />
        {label}
      </div>
    </div>
  );
}

function Advisory() {
  return (
    <div className="absolute left-[1078px] top-[750px] w-[1877px] h-[617px] bg-[#0691ea] border-2 border-[#5f7080] flex flex-col">
      <div className="h-[89px] pb-[4px] flex items-center justify-center text-white text-[48px] shrink-0">BestPractice Advisory - Abaya, Toby</div>
      <div className="mx-[23px] h-[493px] bg-white border-2 border-[#6b7480] pl-[13px] pr-[17px] pt-[13px] flex flex-col">
        <div className="h-[370px] border-[6px] border-[#fb9c05] border-t-[#fdb000] flex flex-col shrink-0">
          <div className="h-[82px] bg-[#fb9c05] flex shrink-0 -mt-[1px]">
            <svg viewBox="0 0 50 64" className="w-[50px] h-[52px] ml-[9px] mt-[9px] shrink-0" preserveAspectRatio="none">
              <defs>
                <linearGradient id="warn" x1="0" y1="0" x2="1" y2="1">
                  <stop offset="0" stopColor="#fdb813" />
                  <stop offset="1" stopColor="#f5d90a" />
                </linearGradient>
              </defs>
              <path d="M25 0l25 64H0z" fill="url(#warn)" />
              <rect x="23" y="20" width="4" height="26" fill="#111" />
              <rect x="23" y="50" width="4" height="6" fill="#111" />
            </svg>
            <div className="ml-[34px] font-bold text-[29.9px] leading-[44px] text-[#111] -mt-[3px] whitespace-nowrap">
              Place patient on Aspiration Precautions and order SLP eval and treat. Maintain strict NPO and notify physician if this
              <br />
              is a change in the patient's condition and/or if medication order changes are needed.
            </div>
          </div>
          <div className="pl-[144px] pt-[29px]">
            <OrderRow label="Aspiration precautions" />
            <OrderRow label="SLP eval and treat" cls="mt-[16px]" />
            <OrderRow label="Diet: NPO" cls="mt-[18px]" />
          </div>
        </div>
        <div className="flex justify-end gap-[11px] mt-[20px] pr-[6px] text-[32.5px] text-[#222]">
          <div className="w-[257px] h-[65px] bg-[#edf1f4] border-2 border-[#c8ccd0] flex items-center justify-center">
            <svg viewBox="0 0 30 40" className="w-[28px] h-[36px] mr-[16px]">
              <path d="M0 22l5-3 6 10L25 0h5L12 40z" fill="#1f9e3a" />
            </svg>
            <span><span className="underline">A</span>ccept</span>
          </div>
          <div className="w-[257px] h-[65px] bg-[#edf1f4] border-2 border-[#c8ccd0] flex items-center justify-center">
            <span><span className="underline">D</span>ismiss</span>
          </div>
        </div>
      </div>
    </div>
  );
}

export default function App() {
  return (
    <div className="relative w-[3840px] h-[2160px] overflow-hidden bg-[#eef6ff] flex flex-col [font-family:'Liberation_Sans',Arial,sans-serif]">
      <TopBar />
      <TabBar />
      <PatientHeader />
      <div className="flex-1 flex min-h-0">
        <Sidebar />
        <div className="flex-1 flex flex-col min-w-0">
          <div className="h-[66px] shrink-0 flex items-center pl-[10px] text-[40.5px] text-[#1a7fd0]">
            Flowsheets
            <svg viewBox="0 0 40 46" className="w-[38px] h-[46px] ml-auto" fill="none" stroke="#40566e" strokeWidth="3">
              <ellipse cx="20" cy="23" rx="17" ry="21" />
              <path d="M13 17c0-9 14-9 14 0 0 5-7 6-7 12" />
              <path d="M20 33v4" />
            </svg>
            <svg viewBox="0 0 36 46" className="w-[34px] h-[46px] ml-[34px] mr-[21px]">
              <path d="M34 2L4 42" stroke="#40566e" strokeWidth="2" />
              <path d="M36 0v16l-12-8zM0 46V28l12 12z" fill="#40566e" />
            </svg>
          </div>
          <Toolbar />
          <Tabs />
          <div className="ml-[18px] mr-[13px] h-[1633px] shrink-0 bg-white border-x-2 border-b-[3px] border-[#b5b5b5] flex pt-[22px] pb-[25px]">
            <GroupList />
            <div className="w-[1607px] shrink-0 flex">
              <FlowTable />
            </div>
            <DetailPane />
          </div>
        </div>
      </div>
      <div className="absolute right-0 top-[68px] w-[260px] h-[84px] rounded-l-[30px] bg-[#2ba0ee] flex items-center">
        <svg viewBox="0 0 44 64" className="w-[52px] h-[60px] ml-[16px]" fill="none" stroke="#66c0f7" strokeWidth="5">
          <ellipse cx="20" cy="22" rx="16" ry="19" />
          <path d="M29 38l11 24" strokeWidth="7" />
        </svg>
        <div className="ml-[26px] w-[143px] h-[58px] bg-white border-t-[3px] border-[#c4c4c4] flex items-center pl-[11px] text-[35.5px] text-[#b4b4b4]">Search</div>
      </div>
      <Advisory />
    </div>
  );
}
